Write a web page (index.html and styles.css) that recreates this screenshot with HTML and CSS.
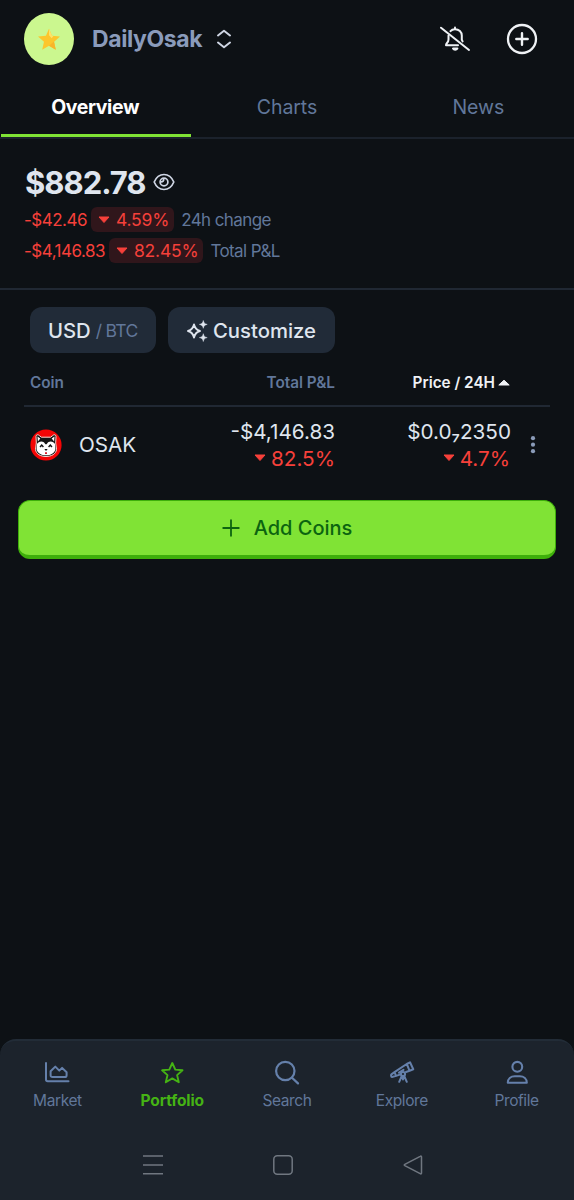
FILE: index.html
```html
<!DOCTYPE html>
<html lang="en">
<head>
    <meta charset="UTF-8">
    <meta name="viewport" content="width=device-width, initial-scale=1.0">
    <title>Portfolio</title>
    <link rel="stylesheet" href="styles.css">
</head>
<body>
    <!-- Header -->
    <header class="header">
        <div class="avatar">
            <svg width="24" height="23" viewBox="0 0 22 22">
                <path d="M11 .8l2.9 6.7 7.6.7-5.7 5 1.7 7.6-6.5-3.9-6.5 3.9 1.7-7.6-5.7-5 7.6-.7z" fill="#fcc62c"/>
                <path d="M11 .8l2.9 6.7 1.3.2-1.6 2.1L11 7z" fill="#fde36a"/>
                <path d="M21.5 8.2l-5.7 5 1.7 7.6-6.5-3.9 4.8-4z" fill="#f7b52b"/>
            </svg>
        </div>
        <span class="portfolio-name">DailyOsak</span>
        <svg class="switch-icon" width="16" height="20" viewBox="0 0 16 20" fill="none" stroke="#cfd6e4" stroke-width="2" stroke-linecap="round" stroke-linejoin="round">
            <path d="M2 6.5L8 1.8l6 4.7M2 13.5l6 4.7 6-4.7"/>
        </svg>
        <div class="header-actions">
            <svg width="32" height="28" viewBox="0 0 32 28" fill="none" stroke="#eff2f5" stroke-width="2" stroke-linecap="round" stroke-linejoin="round">
                <path d="M2 2.7l28 22.3"/>
                <path d="M11.5 6.2c1-1.3 2.7-2 4.5-2 4 0 6.8 2.9 6.8 6.3v4.3l.8 1.6M9.5 10.5v4c0 1.5-.6 2.5-1.500 3.500-.7.8-1 1.300-1 2.200h12"/>
                <path d="M16 2.5V4"/>
                <path d="M14 23.500h4.400c-.5.900-1.200 1.300-2.200 1.300s-1.700-.4-2.200-1.300z" fill="#eff2f5"/>
            </svg>
            <svg width="32" height="32" viewBox="0 0 32 32" fill="none" stroke="#eff2f5" stroke-linecap="round">
                <circle cx="16" cy="16" r="14" stroke-width="2.3"/>
                <path d="M16 10.3v11.4M10.3 16h11.4" stroke-width="2.4"/>
            </svg>
        </div>
    </header>

    <!-- Tabs -->
    <nav class="tabs">
        <a class="tab active">Overview</a>
        <a class="tab">Charts</a>
        <a class="tab">News</a>
    </nav>

    <!-- Balance -->
    <section class="summary">
        <div class="balance">
            <span class="balance-value">$882.78</span>
            <svg width="22" height="18" viewBox="0 0 22 18" fill="none" stroke="#cfd6e4" stroke-width="1.7">
                <path d="M1.200 9C3.200 4.200 6.600 1.500 11 1.500S18.800 4.200 20.800 9c-2 4.800-5.400 7.500-9.800 7.500S3.200 13.800 1.200 9z"/>
                <circle cx="11" cy="9" r="3.900"/>
                <path d="M10.600 5.600c.5 2.200-.8 3.500-3 3.300"/>
            </svg>
        </div>
        <div class="change">
            <span class="amount">-$42.46</span>
            <span class="badge"><svg class="down" width="12" height="8" viewBox="0 0 12 8"><path d="M1 1h10L6 6.500z"/></svg>4.59%</span>
            <span class="change-label">24h change</span>
        </div>
        <div class="change">
            <span class="amount">-$4,146.83</span>
            <span class="badge"><svg class="down" width="12" height="8" viewBox="0 0 12 8"><path d="M1 1h10L6 6.500z"/></svg>82.45%</span>
            <span class="change-label">Total P&amp;L</span>
        </div>
    </section>

    <!-- Controls -->
    <div class="controls">
        <button class="chip currency">USD<span class="alt">/ BTC</span></button>
        <button class="chip customize">
            <svg width="22" height="22" viewBox="0 0 22 22" fill="#dfe5ee">
                <path d="M8 4.500c.9 4 2.200 5.500 6 6.500-3.800 1-5.100 2.500-6 6.500-.9-4-2.200-5.500-6-6.500 3.800-1 5.100-2.500 6-6.500z" fill="none" stroke="#dfe5ee" stroke-width="1.900" stroke-linejoin="round"/>
                <path d="M17.300.5c.5 2.500 1.400 3.400 3.900 3.900-2.500.5-3.400 1.400-3.900 3.900-.5-2.500-1.400-3.400-3.900-3.900 2.500-.5 3.400-1.400 3.900-3.900zM17.300 13.700c.5 2.500 1.400 3.400 3.900 3.900-2.500.5-3.400 1.400-3.900 3.900-.5-2.500-1.400-3.400-3.900-3.900 2.500-.5 3.400-1.400 3.900-3.900z" stroke="#dfe5ee" stroke-width=".5"/>
            </svg>
            Customize
        </button>
    </div>

    <!-- Coin list -->
    <section class="coins">
        <div class="coins-row coins-head">
            <span>Coin</span>
            <span class="right">Total P&amp;L</span>
            <span class="right sorted">Price / 24H<svg width="12" height="8" viewBox="0 0 12 8"><path d="M.8 6L6 1.200 11.200 6z" fill="#eff2f5" stroke="#eff2f5" stroke-linejoin="round"/></svg></span>
        </div>
        <div class="coins-row coin">
            <div class="coin-name">
                <svg width="32" height="32" viewBox="0 0 32 32">
                    <circle cx="16" cy="16" r="15.600" fill="#f40505"/>
                    <path d="M6 7.500c0-2 2-2.300 3.500-.8l1.800 1.500h9.400l1.800-1.500C24 5.200 26 5.500 26 7.500l-.3 6.500.8 6.500c-.5 4.500-5 7-10.500 7s-10-2.500-10.500-7l.8-6.500z" fill="#151515" stroke="#f6d9d3" stroke-width="1"/>
                    <path d="M7.500 7.500l2.800 1.900-2.400 3zM24.500 7.500l-2.800 1.900 2.400 3z" fill="#fff"/>
                    <path d="M7 15c1.500-3 6.500-3.500 8-.3.400.8 1.600.8 2 0 1.500-3.200 6.500-2.700 8 .3l.4 5.500c-1 3.700-4.700 5.800-9.400 5.800s-8.400-2.100-9.400-5.800z" fill="#fff"/>
                    <path d="M10 18l1.700-2 1.700 2M18.600 18l1.700-2 1.700 2" fill="none" stroke="#111" stroke-width="1.300"/>
                    <path d="M14.300 20h3.400L16 22z" fill="#111"/>
                    <path d="M15 23.300h2V25h-2z" fill="#d8202a"/>
                </svg>
                <span>OSAK</span>
            </div>
            <div class="coin-values">
                <span class="pnl">-$4,146.83</span>
                <span class="loss"><svg class="down" width="12" height="8" viewBox="0 0 12 8"><path d="M1 1h10L6 6.500z"/></svg>82.5%</span>
            </div>
            <div class="coin-values">
                <span class="price">$0.0₇2350</span>
                <span class="loss"><svg class="down" width="12" height="8" viewBox="0 0 12 8"><path d="M1 1h10L6 6.500z"/></svg>4.7%</span>
            </div>
            <svg class="more" width="6" height="20" viewBox="0 0 6 20" fill="#8a9bb8">
                <circle cx="3" cy="3.200" r="2.100"/>
                <circle cx="3" cy="9.700" r="2.100"/>
                <circle cx="3" cy="16.200" r="2.100"/>
            </svg>
        </div>
    </section>

    <button class="add-coins">
        <svg width="18" height="18" viewBox="0 0 18 18" stroke="#0c6410" stroke-width="1.800" stroke-linecap="round">
            <path d="M9 1.200v15.600M1.200 9h15.600"/>
        </svg>
        Add Coins
    </button>

    <!-- Bottom navigation -->
    <footer class="bottom">
        <nav class="bottom-nav">
            <a class="nav-item">
                <svg width="28" height="28" viewBox="0 0 28 28" stroke-width="2">
                    <path d="M3 4v16.500c0 1.200.6 1.700 1.700 1.700H25.500"/>
                    <path d="M7.600 12.300l4.700-4.700 4 4 2.800-2.700 4.500 4.300v3c0 1.300-.7 1.900-1.900 1.900H9.500c-1.200 0-1.900-.6-1.900-1.900z"/>
                </svg>
                <span>Market</span>
            </a>
            <a class="nav-item current">
                <svg width="28" height="28" viewBox="0 0 28 28" stroke-width="1.900">
                    <path d="M14.300 4l3 6.600 7.200.7-5.400 4.800 1.700 7.100-6.500-3.800-6.500 3.800 1.700-7.100-5.400-4.800 7.200-.7z"/>
                </svg>
                <span>Portfolio</span>
            </a>
            <a class="nav-item">
                <svg width="28" height="28" viewBox="0 0 28 28" stroke-width="2.200">
                    <circle cx="12.300" cy="12" r="9.200"/>
                    <path d="M19 18.700l6 5.700"/>
                </svg>
                <span>Search</span>
            </a>
            <a class="nav-item">
                <svg width="28" height="28" viewBox="0 0 28 28" stroke-width="2">
                    <path d="M18.800 5l3.200-1.700 3.300 7-3.700 1.500zM18.700 5L6.500 13.200l1.600 3.700 4.500-1.500M18 13l3.600-1.200M6.500 13.200l-3.100 2.100c-.7.500-.4 2.600.6 2.700l4.100-1.100M11 13.700l4.500-2.800"/>
                    <circle cx="15" cy="15" r="2.100"/>
                    <path d="M13.800 17l-2.600 5.800M15 17v3.500M16.200 17l2.600 5.800"/>
                </svg>
                <span>Explore</span>
            </a>
            <a class="nav-item">
                <svg width="28" height="28" viewBox="0 0 28 28" stroke-width="2.100">
                    <circle cx="14.300" cy="7.800" r="4.900"/>
                    <path d="M4.800 23.800c0-4 3-6.600 7-6.600h5c4 0 7 2.600 7 6.600z"/>
                </svg>
                <span>Profile</span>
            </a>
        </nav>
        <div class="system-bar">
            <svg width="20" height="20" viewBox="0 0 20 20"><path d="M0 1h20M0 10h20M0 18.700h20"/></svg>
            <svg width="20" height="20" viewBox="0 0 20 20"><rect x=".8" y=".8" width="18.400" height="18.400" rx="3.500"/></svg>
            <svg width="20" height="20" viewBox="0 0 20 20"><path d="M18.500 2v16c0 .9-.6 1.100-1.300.7L1.800 10.700c-.7-.4-.7-1 0-1.400l15.400-8c.7-.4 1.300-.2 1.300.7z"/></svg>
        </div>
    </footer>
</body>
</html>
```
FILE: styles.css
```css
/* Global Styles */
* {
    box-sizing: border-box;
}

body {
    font-family: Inter, 'Liberation Sans', sans-serif;
    background-color: #0d1115;
    color: #dfe5ee;
    margin: 0;
    height: 1200px;
    display: flex;
    flex-direction: column;
}

svg {
    display: block;
    flex-shrink: 0;
}

button {
    font-family: inherit;
    border: none;
    color: inherit;
}

/* Header */
.header {
    display: flex;
    align-items: center;
    height: 78px;
    padding: 0 36px 0 24px;
}

.avatar {
    display: flex;
    align-items: center;
    justify-content: center;
    width: 50px;
    height: 52px;
    border-radius: 50%;
    background-color: #cbf78f;
}

.portfolio-name {
    margin-left: 18px;
    font-size: 23px;
    font-weight: 700;
    letter-spacing: -0.4px;
    color: #8a9bbb;
}

.switch-icon {
    margin-left: 14px;
}

.header-actions {
    display: flex;
    align-items: center;
    gap: 35px;
    margin-left: auto;
}

/* Tabs */
.tabs {
    display: grid;
    grid-template-columns: repeat(3, 1fr);
    height: 61px;
    border-bottom: 2px solid #1b222c;
}

.tab {
    display: flex;
    align-items: center;
    justify-content: center;
    padding-top: 2px;
    border-bottom: 3px solid transparent;
    font-size: 19.5px;
    letter-spacing: -0.1px;
    color: #61779a;
}

.tab.active {
    margin-left: 1px;
    padding-right: 2px;
    font-weight: 700;
    letter-spacing: -0.4px;
    color: #fff;
    border-bottom-color: #80e335;
}

/* Balance */
.summary {
    height: 151px;
    padding: 23px 24px 0;
    border-bottom: 2px solid #202833;
}

.balance {
    display: flex;
    align-items: center;
    gap: 7px;
    height: 40px;
    padding-left: 1px;
}

.balance-value {
    font-size: 31px;
    font-weight: 750;
    letter-spacing: -1px;
}

.change {
    display: flex;
    align-items: center;
    height: 25px;
    margin-top: 5px;
    font-size: 17px;
    color: #f6403a;
}

.change + .change {
    margin-top: 6px;
}

.amount {
    letter-spacing: -0.5px;
}

.badge {
    display: flex;
    align-items: center;
    gap: 6px;
    height: 25px;
    margin: 0 7px 0 4px;
    padding: 0 5px 0 7px;
    border-radius: 6px;
    background-color: #30161b;
    font-size: 17.5px;
    letter-spacing: -0.2px;
}

.change-label {
    color: #61779a;
    letter-spacing: -0.6px;
}

.down {
    fill: #f6403a;
    stroke: #f6403a;
    stroke-linejoin: round;
}

/* Controls */
.controls {
    display: flex;
    gap: 12px;
    padding: 17px 30px 0;
}

.chip {
    display: flex;
    align-items: center;
    height: 46px;
    border-radius: 12px;
    background-color: #212b38;
    font-size: 20.3px;
    font-weight: 500;
}

.currency {
    width: 126px;
    padding: 1px 0 0 18px;
    gap: 5px;
}

.alt {
    font-size: 17.5px;
    font-weight: 400;
    letter-spacing: -0.7px;
    white-space: nowrap;
    color: #61779a;
}

.customize {
    width: 167px;
    padding: 1px 0 0 18px;
    gap: 5px;
}

/* Coin list */
.coins {
    margin: 0 24px;
}

.coins-row {
    display: grid;
    grid-template-columns: 140px 165px 1fr 40px;
    align-items: center;
    padding-left: 6px;
}

.coins-head {
    height: 54px;
    padding-top: 7px;
    border-bottom: 2px solid #202833;
    font-size: 15.3px;
    font-weight: 600;
    color: #61779a;
}

.right {
    text-align: right;
}

.sorted {
    display: flex;
    align-items: center;
    justify-content: flex-end;
    gap: 3px;
    color: #eff2f5;
}

.coin {
    height: 75px;
    font-size: 20.7px;
}

.coin-name {
    display: flex;
    align-items: center;
    gap: 17px;
}

.coin-values {
    display: flex;
    flex-direction: column;
    align-items: flex-end;
    line-height: 27px;
}

.price {
    margin-right: -1px;
}

.loss {
    display: flex;
    align-items: center;
    gap: 5px;
    color: #f6403a;
}

.more {
    justify-self: center;
    margin-left: 6px;
}

/* Add coins button */
.add-coins {
    display: flex;
    align-items: center;
    justify-content: center;
    gap: 14px;
    height: 59px;
    margin: 18px 18px 0;
    padding: 0 0 1px;
    border: 1px solid #3eaf0b;
    border-bottom-width: 4px;
    border-radius: 12px;
    background-color: #80e335;
    font-size: 20px;
    font-weight: 500;
    color: #0c6410;
}

/* Bottom navigation */
.bottom {
    height: 161px;
    margin-top: auto;
    border-top: 2px solid #222c37;
    border-radius: 16px 16px 0 0;
    background-color: #1c232c;
}

.bottom-nav {
    display: grid;
    grid-template-columns: repeat(5, 1fr);
    padding-top: 18px;
}

.nav-item {
    display: flex;
    flex-direction: column;
    align-items: center;
    gap: 4px;
    font-size: 15.5px;
    line-height: 20px;
    letter-spacing: -0.4px;
    color: #61779a;
}

.nav-item svg {
    fill: none;
    stroke: #6580ab;
    stroke-linecap: round;
    stroke-linejoin: round;
}

.nav-item.current {
    font-weight: 700;
    letter-spacing: -0.1px;
    color: #45b314;
}

.nav-item.current svg {
    stroke: #45b314;
}

/* System bar */
.system-bar {
    display: flex;
    justify-content: space-between;
    width: 280px;
    margin: 44px 0 0 143px;
}

.system-bar svg {
    fill: none;
    stroke: #707780;
    stroke-width: 1.5;
}
```
